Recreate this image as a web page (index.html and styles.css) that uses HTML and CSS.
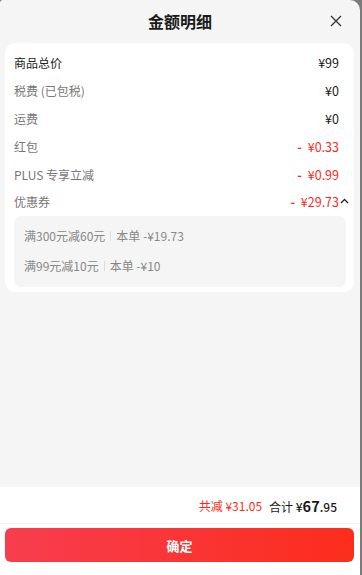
FILE: index.html
```html
<!DOCTYPE html>
<html lang="zh">
<head>
<meta charset="utf-8">
<link rel="stylesheet" href="styles.css">
</head>
<body>
<div class="panel">
  <div class="header">
    <div class="title">金额明细</div>
    <svg class="close" width="14" height="14" viewBox="0 0 14 14"><path d="M2 2L12 12M12 2L2 12" stroke="#333" stroke-width="1.3" fill="none"/></svg>
  </div>
  <div class="card">
    <div class="row"><span class="label dark">商品总价</span><span class="val">¥99</span></div>
    <div class="row"><span class="label">税费 (已包税)</span><span class="val">¥0</span></div>
    <div class="row"><span class="label">运费</span><span class="val">¥0</span></div>
    <div class="row"><span class="label">红包</span><span class="val red"><b class="minus">-</b> ¥0.33</span></div>
    <div class="row"><span class="label">PLUS 专享立减</span><span class="val red"><b class="minus">-</b> ¥0.99</span></div>
    <div class="row"><span class="label">优惠券</span><span class="val red"><b class="minus">-</b> ¥29.73<svg class="chev" width="9" height="6" viewBox="0 0 9 6"><path d="M1 5L4.5 1.5L8 5" stroke="#222" stroke-width="1.3" fill="none"/></svg></span></div>
    <div class="coupons">
      <div class="coupon"><span>满300元减60元</span><i class="sep"></i><span>本单 -¥19.73</span></div>
      <div class="coupon"><span>满99元减10元</span><i class="sep"></i><span>本单 -¥10</span></div>
    </div>
  </div>
  <div class="spacer"></div>
  <div class="footer">
    <div class="summary"><span class="red">共减 ¥31.05</span><span class="total">合计 <span class="amt">¥<b>67</b>.95</span></span></div>
    <div class="btnwrap"><div class="btn">确定</div></div>
  </div>
</div>
</body>
</html>
```
FILE: styles.css
```css
* { box-sizing: border-box; }
html, body { margin: 0; padding: 0; }
body {
  width: 362px;
  height: 575px;
  background: #7b7b7b;
  font-family: "Noto Sans CJK SC", "Noto Sans", sans-serif;
  overflow: hidden;
}
.panel {
  width: 360px;
  height: 575px;
  background: #f5f5f5;
  border-radius: 3px 10px 0 0;
  display: flex;
  flex-direction: column;
  overflow: hidden;
}
.header {
  height: 43px;
  display: flex;
  align-items: center;
  justify-content: center;
  position: relative;
}
.title {
  font-size: 16px;
  font-weight: 700;
  color: #1a1a1a;
  margin-top: -1px;
}
.close {
  position: absolute;
  right: 17px;
  top: 14px;
}
.card {
  margin: 0 6px 0 5px;
  background: #fff;
  border-radius: 10px;
  padding: 6px 8px 5px 9px;
}
.row {
  height: 27.8px;
  display: flex;
  align-items: center;
  justify-content: space-between;
  font-size: 12px;
  padding-right: 7px;
}
.label { color: #777; }
.label.dark { color: #222; }
.val { color: #1a1a1a; position: relative; font-size: 12.5px; }
.minus { font-weight: 700; margin-right: 3px; }
.red { color: #fa2c19; }
.chev {
  position: absolute;
  right: -10px;
  top: 6px;
}
.coupons {
  background: #f5f5f5;
  border-radius: 7px;
  padding: 5px 10px 6px;
}
.coupon {
  height: 30px;
  display: flex;
  align-items: center;
  font-size: 12px;
  color: #888;
}
.sep {
  display: inline-block;
  width: 1px;
  height: 10px;
  background: #ddd;
  margin: 0 5px;
}
.spacer { flex: 1; }
.footer {
  background: #fff;
  height: 88px;
}
.summary {
  height: 37px;
  display: flex;
  justify-content: flex-end;
  align-items: center;
  padding-right: 23px;
  font-size: 12px;
  border-bottom: 1px solid #f2f2f2;
}
.total { color: #1a1a1a; margin-left: 7px; }
.amt { font-size: 12px; font-weight: 500; }
.amt b { font-size: 14.5px; font-weight: 700; }
.btnwrap { padding: 4px 6px 0 5px; }
.btn {
  height: 34px;
  border-radius: 6px;
  background: linear-gradient(90deg, #f73d4f, #fc2d1c);
  color: #fff;
  font-size: 13px;
  font-weight: 700;
  display: flex;
  align-items: center;
  justify-content: center;
}
```
